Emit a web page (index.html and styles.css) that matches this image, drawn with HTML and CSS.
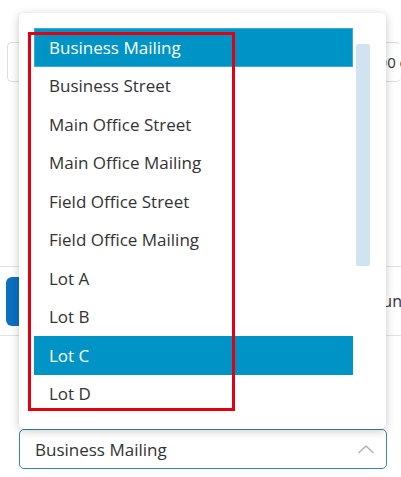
FILE: index.html
```html
<!DOCTYPE html>
<html>
<head>
<meta charset="utf-8">
<link rel="stylesheet" href="styles.css">
</head>
<body>
<div class="page">
  <div class="top-row">
    <div class="field"><span class="field-text">Up to 100 ch</span></div>
  </div>
  <div class="divider"></div>
  <div class="action-row">
    <div class="btn"></div>
    <span class="row-text">Rerun</span>
  </div>
  <div class="divider"></div>
  <div class="select-wrap">
    <div class="select">
      <span>Business Mailing</span>
      <svg class="chev" width="18" height="10" viewBox="0 0 18 10"><path d="M1.5 9 L9 2 L16.5 9" fill="none" stroke="#b4b4b4" stroke-width="1.6"/></svg>
    </div>
    <div class="menu">
      <ul class="list">
        <li class="item selected">Business Mailing</li>
        <li class="item">Business Street</li>
        <li class="item">Main Office Street</li>
        <li class="item">Main Office Mailing</li>
        <li class="item">Field Office Street</li>
        <li class="item">Field Office Mailing</li>
        <li class="item">Lot A</li>
        <li class="item">Lot B</li>
        <li class="item hover">Lot C</li>
        <li class="item">Lot D</li>
      </ul>
      <div class="scroll"><div class="thumb"></div></div>
      <div class="mark"></div>
    </div>
  </div>
</div>
</body>
</html>
```
FILE: styles.css
```css
* { box-sizing: border-box; }
html, body { margin: 0; padding: 0; background: #fff; }
body { font-family: "Open Sans", Lato, sans-serif; color: #333; overflow: hidden; }
.page { width: 401px; height: 477px; position: relative; }

.top-row { padding: 42px 0 0 7px; height: 82px; }
.field {
  height: 40px; border: 1px solid #dcdcdc; border-radius: 5px; border-right: none;
  display: flex; align-items: center; justify-content: flex-end; overflow: hidden;
  font-size: 15px; white-space: nowrap;
}
.field-text { margin-right: -15px; }
.divider { height: 1px; background: #e2e2e2; }
.top-row + .divider { margin-top: 184px; }
.action-row { height: 68px; display: flex; align-items: center; justify-content: space-between; padding-left: 6px; overflow: hidden; }
.btn { width: 40px; height: 49px; background: #0b70c0; border-radius: 6px; }
.row-text { font-size: 16px; margin-right: -1px; white-space: nowrap; }

.select-wrap { position: relative; padding: 93px 14px 0 19px; }
.select {
  height: 40px; border: 1px solid #3d83ab; border-radius: 5px;
  display: flex; align-items: center; justify-content: space-between;
  padding: 0 11px 0 15px; font-size: 17px; color: #333;
}
.chev { display: block; }

.menu {
  position: absolute; left: 19px; top: -323px; width: 367px; height: 416px;
  background: #fff; border-radius: 5px; box-shadow: 0 2px 10px rgba(0,0,0,0.22);
  padding: 15px 16px 16px 15px; display: flex; gap: 3px;
}
.list { list-style: none; margin: 0; padding: 0; width: 319px; }
.item { height: 38.5px; display: flex; align-items: center; padding-left: 15px; font-size: 17px; color: #333; white-space: nowrap; }
.item.selected { background: #0094c6; color: #fff; box-shadow: inset 0 0 0 1px #3aaad6; }
.item.hover { background: #0094c6; color: #fff; }
.scroll { width: 14px; padding-top: 16px; }
.thumb { height: 222px; background: #cfe3f1; border-radius: 2px; }
.mark {
  position: absolute; left: 9px; top: 19px; width: 207px; height: 379px;
  border: 3px solid #e3000f;
}
```
